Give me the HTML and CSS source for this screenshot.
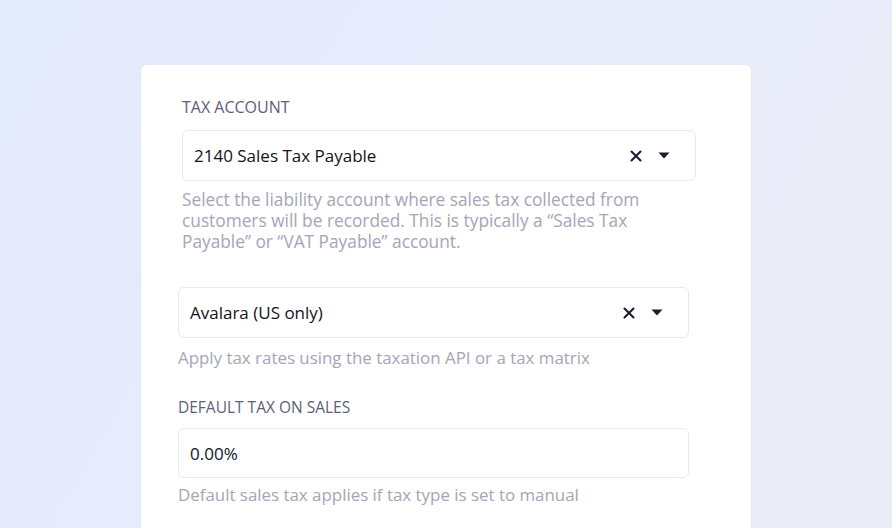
FILE: index.html
```html
<!DOCTYPE html>
<html>
<head>
<meta charset="utf-8">
<link rel="stylesheet" href="styles.css">
</head>
<body>
<div class="page">
  <div class="card">
    <section class="field field-first">
      <div class="label">TAX ACCOUNT</div>
      <div class="select">
        <span class="value">2140 Sales Tax Payable</span>
        <span class="controls">
          <svg class="clear" width="12" height="12" viewBox="0 0 12 12"><path d="M1.5 1.5 L10.5 10.5 M10.5 1.5 L1.5 10.5" stroke="#1b1d2e" stroke-width="2.1" stroke-linecap="round"/></svg>
          <svg class="caret" width="12" height="7" viewBox="0 0 12 7"><path d="M0.5 0.5 H11.5 L6 6.5 Z" fill="#1b1d2e"/></svg>
        </span>
      </div>
      <p class="help">Select the liability account where sales tax collected from customers will be recorded. This is typically a “Sales Tax Payable” or “VAT Payable” account.</p>
    </section>
    <section class="field field-second">
      <div class="select">
        <span class="value">Avalara (US only)</span>
        <span class="controls">
          <svg class="clear" width="12" height="12" viewBox="0 0 12 12"><path d="M1.5 1.5 L10.5 10.5 M10.5 1.5 L1.5 10.5" stroke="#1b1d2e" stroke-width="2.1" stroke-linecap="round"/></svg>
          <svg class="caret" width="12" height="7" viewBox="0 0 12 7"><path d="M0.5 0.5 H11.5 L6 6.5 Z" fill="#1b1d2e"/></svg>
        </span>
      </div>
      <p class="help">Apply tax rates using the taxation API or a tax matrix</p>
    </section>
    <section class="field field-third">
      <div class="label">DEFAULT TAX ON SALES</div>
      <div class="select">
        <span class="value">0.00%</span>
      </div>
      <p class="help">Default sales tax applies if tax type is set to manual</p>
    </section>
  </div>
</div>
</body>
</html>
```

FILE: styles.css
```css
html, body {
  margin: 0;
  padding: 0;
  height: 100%;
  overflow: hidden;
}
body {
  font-family: "Open Sans", "Noto Sans", sans-serif;
  background: linear-gradient(120deg, #e3eafc 0%, #e7ecfa 50%, #ebedf6 100%);
}
.page {
  padding: 65px 0 0 141px;
}
.card {
  width: 610px;
  height: 520px;
  background: #ffffff;
  border-radius: 6px;
  box-shadow: 0 1px 3px rgba(120, 130, 170, 0.08);
}
.field {
  display: flex;
  flex-direction: column;
}
.field-first {
  padding: 32px 55px 0 41px;
}
.field-second {
  padding: 35px 62px 0 37px;
}
.field-third {
  padding: 29px 62px 0 37px;
}
.label {
  font-size: 15.5px;
  line-height: 20px;
  color: #5b6177;
}
.field-first .label {
  font-size: 16px;
  margin-bottom: 13px;
}
.field-third .label {
  margin-bottom: 11px;
}
.select {
  height: 51px;
  box-sizing: border-box;
  border: 1px solid #e7e9f0;
  border-radius: 6px;
  display: flex;
  align-items: center;
  padding: 0 25px 0 11px;
  font-size: 17px;
  color: #111320;
}
.field-third .select {
  height: 50px;
}
.value {
  flex: 1;
}
.controls {
  display: flex;
  align-items: center;
  gap: 16px;
}
.help {
  margin: 8px 0 0 0;
  font-size: 16.9px;
  line-height: 21px;
  color: #a3a6b6;
}
.field-first .help {
  font-size: 17.3px;
}
.field-second .help {
  margin-top: 9px;
}
.field-third .help {
  margin-top: 6px;
}
```
